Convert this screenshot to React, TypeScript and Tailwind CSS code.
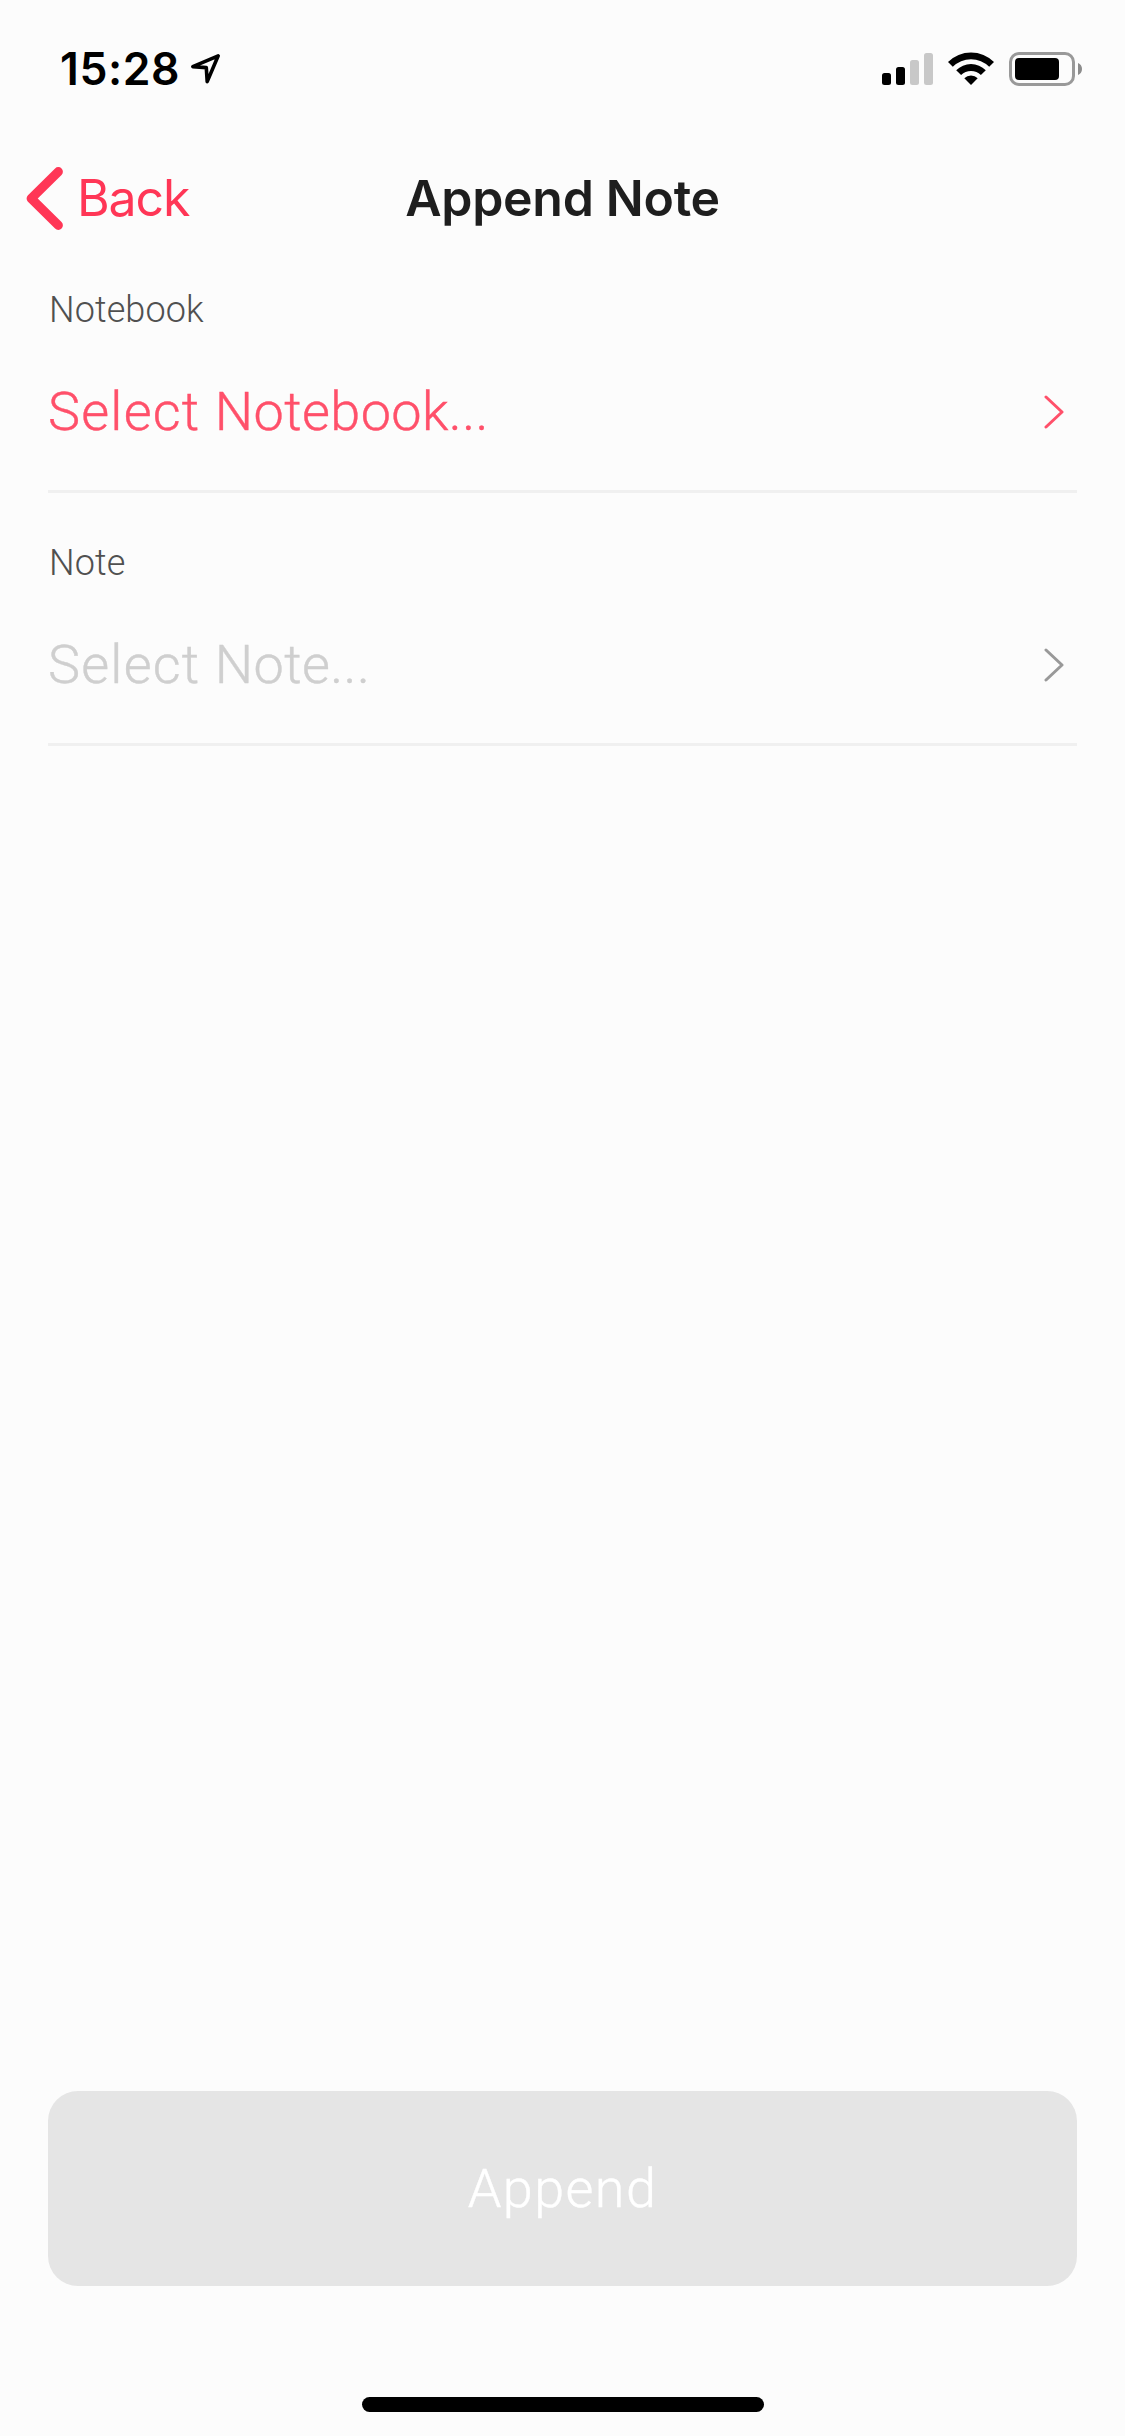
import clsx from "clsx";

interface SelectFieldProps {
  label: string;
  placeholder: string;
  disabled?: boolean;
}

function StatusBar() {
  return (
    <div className="flex h-[132px] items-start justify-between pt-[42px] pr-[42px] pl-[60px]">
      <div className="flex items-center">
        <span className="w-[130px] whitespace-nowrap font-[Inter,sans-serif] text-[44.5px] leading-[54px] font-semibold tracking-[0.6px] text-black">
          15:28
        </span>
        <svg width="32" height="34" viewBox="190 52 32 34" fill="none">
          <path
            d="M218.2 55.8 192.8 66.6 206.3 67.6 207.2 81.6Z"
            stroke="#000"
            strokeWidth="3.6"
            strokeLinejoin="round"
          />
        </svg>
      </div>

      <svg width="201" height="34" viewBox="882 52 201 34" className="mt-[10px]">
        <rect x="882" y="73" width="9" height="12" rx="2.5" />
        <rect x="896" y="67" width="9" height="18" rx="2.5" />
        <rect x="910" y="60" width="9" height="25" rx="2.5" fill="#c8c8c8" />
        <rect x="924" y="53" width="9" height="32" rx="2.5" fill="#c8c8c8" />
        <path d="M948 62A32.6 32.6 0 0 1 994 62L989.2 66.8A25.8 25.8 0 0 0 952.8 66.8Z" />
        <path d="M956.2 70.2A21 21 0 0 1 985.8 70.2L980.9 75.1A14 14 0 0 0 961.1 75.1Z" />
        <path d="M964.3 78.3A9.5 9.5 0 0 1 977.7 78.3L971 85Z" />
        <rect
          x="1010.5"
          y="53.5"
          width="63"
          height="31"
          rx="8.5"
          fill="none"
          stroke="#999"
          strokeWidth="3"
        />
        <rect x="1015" y="58" width="44" height="22" rx="4" />
        <path d="M1078 63C1080.5 64 1082 66.3 1082 69S1080.5 74 1078 75Z" fill="#8c8c8c" />
      </svg>
    </div>
  );
}

function Header() {
  return (
    <header className="grid h-[132px] grid-cols-3 items-center pb-px font-[Inter,sans-serif] text-[50px] leading-[60px]">
      <button className="flex items-center pl-[26px] text-[#ff3656]">
        <svg
          width="38"
          height="64"
          viewBox="26 166 38 64"
          fill="none"
          className="mt-px"
        >
          <path
            d="M58.3 171.7 31.2 198.5 58.3 225.3"
            stroke="currentColor"
            strokeWidth="9.2"
            strokeLinecap="round"
            strokeLinejoin="round"
          />
        </svg>
        <span className="ml-[13px] tracking-[-1.1px]">Back</span>
      </button>
      <h1 className="text-center font-semibold tracking-[-0.3px] whitespace-nowrap text-[#1e1e1e]">
        Append Note
      </h1>
    </header>
  );
}

function SelectField({ label, placeholder, disabled }: SelectFieldProps) {
  return (
    <div className="flex h-[253px] flex-col border-b-[3px] border-[#f0f0f0] pt-[48px]">
      <span className="pl-px text-[36px] leading-[44px] tracking-[0.1px] text-[#505050]">
        {label}
      </span>
      <div
        className={clsx(
          "mt-[48px] flex items-center justify-between",
          disabled ? "text-[#cfcfcf]" : "text-[#ff506a]"
        )}
      >
        <span className="text-[54px] leading-[64px] tracking-[0.4px] [-webkit-text-stroke:0.4px_currentColor]">
          <span className="tracking-[1.2px]">Select </span>
          {placeholder}
        </span>
        <svg
          width="20"
          height="34"
          viewBox="1044 395 20 34"
          fill="none"
          className={clsx("mr-[13px]", disabled && "text-[#999]")}
        >
          <path
            d="M1046 397 1062 412 1046 427"
            stroke="currentColor"
            strokeWidth="3"
            strokeLinecap="round"
            strokeLinejoin="round"
          />
        </svg>
      </div>
    </div>
  );
}

export default function App() {
  return (
    <div className="flex h-[2436px] w-[1125px] flex-col bg-[#fcfcfc]">
      <StatusBar />
      <Header />

      <main className="-mt-6 flex flex-1 flex-col px-12 font-[Roboto,sans-serif] font-light">
        <SelectField label="Notebook" placeholder="Notebook..." />
        <SelectField label="Note" placeholder="Note..." disabled />

        <button
          disabled
          className="mt-auto h-[195px] rounded-[30px] bg-[#e5e5e5] text-[54px] tracking-[1.4px] text-white [-webkit-text-stroke:0.4px_currentColor]"
        >
          Append
        </button>
      </main>

      <div className="flex h-[150px] items-end justify-center pb-6">
        <div className="ml-px h-[15px] w-[402px] rounded-full bg-black" />
      </div>
    </div>
  );
}
